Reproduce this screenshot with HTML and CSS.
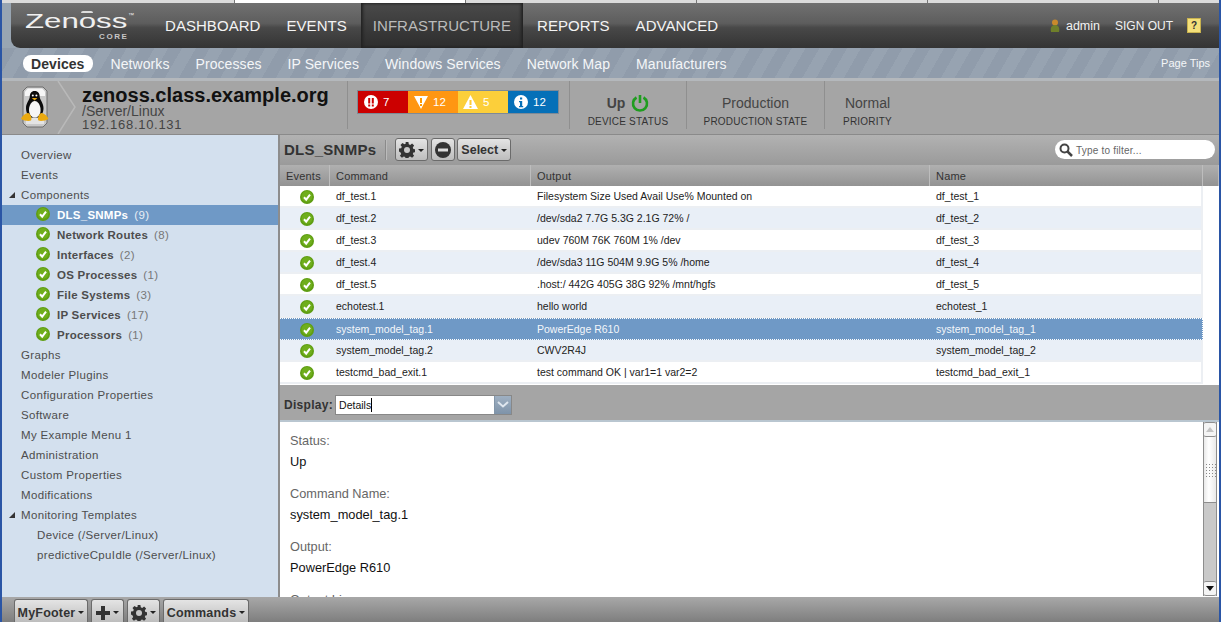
FILE: index.html
```html
<!DOCTYPE html>
<html lang="en">
<head>
<meta charset="utf-8">
<title>Zenoss Core</title>
<link rel="stylesheet" href="styles.css">
</head>
<body>
<svg class="defs" width="0" height="0" aria-hidden="true">
  <defs>
    <symbol id="ok" viewBox="0 0 14 14">
      <circle cx="7" cy="7" r="7" fill="#5f9e12"/>
      <circle cx="7" cy="6.400" r="5.400" fill="#6fae1c"/>
      <path d="M4 7.200 6.200 9.600 10 4.600" fill="none" stroke="#fff" stroke-width="2"/>
    </symbol>
    <symbol id="gear" viewBox="0 0 16 16">
      <path fill="#333" d="M6.600 0h2.800l.4 2.300 1.400.6 1.900-1.300 2 2-1.300 1.900.6 1.400 2.300.4v2.800l-2.300.4-.6 1.400 1.300 1.900-2 2-1.900-1.300-1.400.6-.4 2.300H6.600l-.4-2.300-1.400-.6-1.900 1.300-2-2 1.300-1.900-.6-1.400L-.1 9.400V6.600l2.300-.4.6-1.400L1.500 2.900l2-2 1.900 1.300 1.400-.6z"/>
      <circle cx="8" cy="8" r="3" fill="#c8c8c8"/>
    </symbol>
  </defs>
</svg>
<div class="topstrip">
  <span class="tab t1"></span><span class="tab t2"></span><span class="tab t3"></span><span class="tab t4"></span><span class="tab t5"></span><span class="tab t6"></span>
</div>
<header class="mainnav">
  <div class="logo">
    <span class="logo-word">Zenoss</span>
    <span class="logo-arc"></span>
    <span class="logo-tm">™</span>
    <span class="logo-core">CORE</span>
  </div>
  <nav class="navitems">
    <a class="navitem">DASHBOARD</a>
    <a class="navitem">EVENTS</a>
    <a class="navitem active">INFRASTRUCTURE</a>
    <a class="navitem">REPORTS</a>
    <a class="navitem">ADVANCED</a>
  </nav>
  <div class="userbox">
    <svg class="usericon" width="10" height="14" viewBox="0 0 10 14"><circle cx="5" cy="3.500" r="3" fill="#c98a2c"/><path d="M1 13c-1-5 1-7 4-7s5 2 4 7z" fill="#6f7f2a"/></svg>
    <span class="username">admin</span>
    <span class="signout">SIGN OUT</span>
    <span class="help">?</span>
  </div>
</header>
<div class="subnav">
  <a class="subitem selected">Devices</a>
  <a class="subitem">Networks</a>
  <a class="subitem">Processes</a>
  <a class="subitem">IP Services</a>
  <a class="subitem">Windows Services</a>
  <a class="subitem">Network Map</a>
  <a class="subitem">Manufacturers</a>
  <a class="pagetips">Page Tips</a>
</div>
<section class="devhead">
  <div class="devicon">
    <svg width="30" height="44" viewBox="0 0 30 44">
      <path d="M7 1h16l4 4v32l-4 4H7l-4-4V5z" fill="#c9c9c9" stroke="#6d6d6d"/>
      <path d="M8 2.500h14l3 3V10H5V5.500z" fill="#f6f6f6"/>
      <path d="M6 32h18v6H6z" fill="#e4e4e4"/>
      <path d="M14.500 5c-3.200 0-4.700 2.600-4.700 5.600 0 3.400-3.800 6.400-3.800 11.400 0 4.400 2 8 4.500 9.500h8.500c2.500-1.500 4.500-5.100 4.500-9.500 0-5-3.800-8-3.800-11.400 0-3-1.500-5.600-5-5.600z" fill="#0c0c0c"/>
      <path d="M14.800 15c-3.300 0-5.800 4.400-5.800 9 0 4.400 2.400 7.600 5.800 7.600s5.800-3.200 5.800-7.600c0-4.600-2.500-9-5.800-9z" fill="#f6f6f6"/>
      <circle cx="12.800" cy="9.400" r="1" fill="#fff"/><circle cx="16.400" cy="9.400" r="1" fill="#fff"/>
      <path d="M11.800 12h5.600l-2.800 2.500z" fill="#e8a812"/>
      <path d="M8 27c-3 .4-6.500 3.800-7 6 2.500 1.600 7.500 2.600 10 1.600 1.400-2.200-.6-7.200-3-7.600zM21.500 27c3 .4 6.500 3.800 7 6-2.500 1.600-7.500 2.600-10 1.600-1.400-2.200.6-7.200 3-7.600z" fill="#eaa90f"/>
    </svg>
  </div>
  <svg class="chevron" width="20" height="53" viewBox="0 0 20 53"><path d="M1 0 18 26 1 53" fill="none" stroke="#b9b9b9" stroke-width="1.500"/></svg>
  <div class="devtitle">
    <div class="devname">zenoss.class.example.org</div>
    <div class="devpath">/Server/Linux</div>
    <div class="devip">192.168.10.131</div>
  </div>
  <div class="evrainbow">
    <div class="ev crit"><svg width="14" height="14" viewBox="0 0 14 14"><circle cx="7" cy="7" r="7" fill="#fff"/><path d="M4.200 3h2v5.500h-2zM7.800 3h2v5.500h-2zM4.200 9.500h2v2h-2zM7.800 9.500h2v2h-2z" fill="#c00"/></svg><span>7</span></div>
    <div class="ev err"><svg width="14" height="14" viewBox="0 0 14 14"><path d="M0 1h14L7 14z" fill="#fff"/><path d="M6 3h2v5H6zM6 9h2v2H6z" fill="#f90"/></svg><span>12</span></div>
    <div class="ev warn"><svg width="15" height="14" viewBox="0 0 15 14"><path d="M7.500 0 15 14H0z" fill="#fff"/><path d="M6.500 5h2v5h-2zM6.500 11h2v2h-2z" fill="#fc3"/></svg><span>5</span></div>
    <div class="ev info"><svg width="14" height="14" viewBox="0 0 14 14"><circle cx="7" cy="7" r="7" fill="#fff"/><path d="M6 2.500h2.200v2H6zM5 6h3.200v5h1v1.200H5V11h1V7.200H5z" fill="#0570b8"/></svg><span>12</span></div>
  </div>
  <div class="stat s-status">
    <div class="statval up">Up<svg class="power" width="18" height="18" viewBox="0 0 18 18"><path d="M5.500 3.500a7 7 0 1 0 7 0" fill="none" stroke="#1f9d1f" stroke-width="2.600"/><path d="M9 1v8" stroke="#1f9d1f" stroke-width="2.600"/></svg></div>
    <div class="statlabel">DEVICE STATUS</div>
  </div>
  <div class="stat s-prod">
    <div class="statval">Production</div>
    <div class="statlabel">PRODUCTION STATE</div>
  </div>
  <div class="stat s-prio">
    <div class="statval">Normal</div>
    <div class="statlabel">PRIORITY</div>
  </div>
</section>
<main class="workspace">
  <aside class="sidebar">
    <ul class="tree">
      <li class="node">Overview</li>
      <li class="node">Events</li>
      <li class="node"><span class="arrow"></span>Components</li>
      <li class="comp sel"><svg class="okicon"><use href="#ok"/></svg><b>DLS_SNMPs</b><span class="cnt">(9)</span></li>
      <li class="comp"><svg class="okicon"><use href="#ok"/></svg><b>Network Routes</b><span class="cnt">(8)</span></li>
      <li class="comp"><svg class="okicon"><use href="#ok"/></svg><b>Interfaces</b><span class="cnt">(2)</span></li>
      <li class="comp"><svg class="okicon"><use href="#ok"/></svg><b>OS Processes</b><span class="cnt">(1)</span></li>
      <li class="comp"><svg class="okicon"><use href="#ok"/></svg><b>File Systems</b><span class="cnt">(3)</span></li>
      <li class="comp"><svg class="okicon"><use href="#ok"/></svg><b>IP Services</b><span class="cnt">(17)</span></li>
      <li class="comp"><svg class="okicon"><use href="#ok"/></svg><b>Processors</b><span class="cnt">(1)</span></li>
      <li class="node">Graphs</li>
      <li class="node">Modeler Plugins</li>
      <li class="node">Configuration Properties</li>
      <li class="node">Software</li>
      <li class="node">My Example Menu 1</li>
      <li class="node">Administration</li>
      <li class="node">Custom Properties</li>
      <li class="node">Modifications</li>
      <li class="node"><span class="arrow"></span>Monitoring Templates</li>
      <li class="leaf">Device (/Server/Linux)</li>
      <li class="leaf">predictiveCpuIdle (/Server/Linux)</li>
    </ul>
  </aside>
  <div class="content">
    <div class="toolbar">
      <span class="tbtitle">DLS_SNMPs</span>
      <span class="tbsep"></span>
      <button class="btn btn-gear"><svg width="16" height="16"><use href="#gear"/></svg><i class="caret"></i></button>
      <button class="btn btn-minus"><svg width="16" height="16" viewBox="0 0 16 16"><circle cx="8" cy="8" r="8" fill="#333"/><rect x="3" y="6.500" width="10" height="3" fill="#ddd"/></svg></button>
      <button class="btn btn-select">Select<i class="caret"></i></button>
      <label class="filter">
        <svg width="14" height="14" viewBox="0 0 14 14"><circle cx="5.500" cy="5.500" r="4" fill="none" stroke="#444" stroke-width="2"/><path d="M8.500 8.500 13 13" stroke="#444" stroke-width="2.500"/></svg>
        <span>Type to filter...</span>
      </label>
    </div>
    <div class="grid">
      <div class="ghead">
        <div class="hc c1">Events</div><div class="hc c2">Command</div><div class="hc c3">Output</div><div class="hc c4">Name</div><div class="hc c5"></div>
      </div>
      <div class="row"><div class="c1"><svg class="okrow"><use href="#ok"/></svg></div><div class="c2">df_test.1</div><div class="c3">Filesystem Size Used Avail Use% Mounted on</div><div class="c4">df_test_1</div></div>
      <div class="row alt"><div class="c1"><svg class="okrow"><use href="#ok"/></svg></div><div class="c2">df_test.2</div><div class="c3">/dev/sda2 7.7G 5.3G 2.1G 72% /</div><div class="c4">df_test_2</div></div>
      <div class="row"><div class="c1"><svg class="okrow"><use href="#ok"/></svg></div><div class="c2">df_test.3</div><div class="c3">udev 760M 76K 760M 1% /dev</div><div class="c4">df_test_3</div></div>
      <div class="row alt"><div class="c1"><svg class="okrow"><use href="#ok"/></svg></div><div class="c2">df_test.4</div><div class="c3">/dev/sda3 11G 504M 9.9G 5% /home</div><div class="c4">df_test_4</div></div>
      <div class="row"><div class="c1"><svg class="okrow"><use href="#ok"/></svg></div><div class="c2">df_test.5</div><div class="c3">.host:/ 442G 405G 38G 92% /mnt/hgfs</div><div class="c4">df_test_5</div></div>
      <div class="row alt"><div class="c1"><svg class="okrow"><use href="#ok"/></svg></div><div class="c2">echotest.1</div><div class="c3">hello world</div><div class="c4">echotest_1</div></div>
      <div class="row chosen"><div class="c1"><svg class="okrow"><use href="#ok"/></svg></div><div class="c2">system_model_tag.1</div><div class="c3">PowerEdge R610</div><div class="c4">system_model_tag_1</div></div>
      <div class="row alt"><div class="c1"><svg class="okrow"><use href="#ok"/></svg></div><div class="c2">system_model_tag.2</div><div class="c3">CWV2R4J</div><div class="c4">system_model_tag_2</div></div>
      <div class="row"><div class="c1"><svg class="okrow"><use href="#ok"/></svg></div><div class="c2">testcmd_bad_exit.1</div><div class="c3">test command OK | var1=1 var2=2</div><div class="c4">testcmd_bad_exit_1</div></div>
    </div>
    <div class="displaybar">
      <span class="displaylabel">Display:</span>
      <div class="combo">
        <span class="comboval">Details<i class="cursor"></i></span>
        <span class="combobtn"><svg width="12" height="7" viewBox="0 0 12 7"><path d="M1 1 6 5.500 11 1" fill="none" stroke="#dfe6ee" stroke-width="2"/></svg></span>
      </div>
    </div>
    <div class="details">
      <div class="fields">
        <div class="field"><div class="flabel">Status:</div><div class="fvalue">Up</div></div>
        <div class="field"><div class="flabel">Command Name:</div><div class="fvalue">system_model_tag.1</div></div>
        <div class="field"><div class="flabel">Output:</div><div class="fvalue">PowerEdge R610</div></div>
        <div class="field"><div class="flabel">Output Lines:</div></div>
      </div>
      <div class="scrollbar">
        <div class="sb-up"><i></i></div>
        <div class="sb-thumb"><span class="grip"></span></div>
        <div class="sb-track"></div>
        <div class="sb-down"><i></i></div>
      </div>
    </div>
  </div>
</main>
<footer class="footbar">
  <button class="btn fb-my">MyFooter<i class="caret"></i></button>
  <button class="btn fb-plus"><svg width="14" height="14" viewBox="0 0 14 14"><path d="M5 0h4v5h5v4H9v5H5V9H0V5h5z" fill="#333"/></svg><i class="caret"></i></button>
  <button class="btn fb-gear"><svg width="16" height="16"><use href="#gear"/></svg><i class="caret"></i></button>
  <button class="btn fb-cmd">Commands<i class="caret"></i></button>
</footer>
</body>
</html>
```
FILE: styles.css
```css
* { box-sizing: border-box; }
html, body { margin: 0; padding: 0; height: 622px; overflow: hidden; }
body {
  width: 1221px;
  display: flex;
  flex-direction: column;
  font-family: "Liberation Sans", Arial, sans-serif;
  background: #98a5b2;
  border-left: 2px solid #2a55a5;
  border-right: 2px solid #2a55a5;
}
.defs { position: absolute; }
.topstrip { height: 3px; display: flex; background: #dcdcdc; flex: none; overflow: hidden; }
.tab { display: block; height: 3px; border-right: 1px solid #777; background: #dcdcdc; width: 231px; flex: none; }
.t1 { width: 233px; }
.t2 { background: #fff; }
.t6 { width: 60px; border-right: 0; }

.mainnav {
  flex: none; height: 45px; margin-left: 9px; display: flex; align-items: stretch;
  border-bottom-left-radius: 9px; color: #f2f2f2;
  background: linear-gradient(#717171 0%, #5d5d5d 45%, #484848 55%, #343434 100%);
}
.logo { width: 141px; flex: none; position: relative; color: #f0f0f0; }
.logo-word {
  display: block; padding: 8px 0 0 14px; font-size: 20px; line-height: 20px; width: 90px;
  transform: scaleX(1.56); transform-origin: 14px 0;
}
.logo-arc { position: absolute; left: 70px; top: 8px; width: 12px; height: 2px; border-radius: 2px 2px 0 0; background: #ddd; }
.logo-tm { position: absolute; left: 117px; top: 8px; font-size: 6px; line-height: 8px; }
.logo-core { position: absolute; left: 88px; top: 29px; font-size: 8px; line-height: 9px; font-weight: bold; letter-spacing: 1.6px; color: #c6c6c6; }
.navitems { display: flex; }
.navitem { display: block; padding: 14px 13px 0; font-size: 15px; line-height: 18px; color: #f4f4f4; letter-spacing: 0.05px; }
.navitem.active {
  color: #bbb;
  background: linear-gradient(#4a4a4a, #2d2d2d);
  box-shadow: inset 2px 0 3px #222, inset -2px 0 3px #222;
  padding: 14px 12px 0;
  margin: 0 1px;
}
.userbox { margin-left: auto; display: flex; align-items: center; padding: 0 18px 0 0; font-size: 12.500px; height: 45px; }
.usericon { margin-right: 6px; }
.username { margin-right: 15px; }
.signout { margin-right: 14px; font-size: 12px; }
.help {
  width: 14px; height: 15px; background: #f4e07a; border: 1px solid #c8b24f; color: #333;
  font-size: 10px; font-weight: bold; text-align: center; line-height: 13px;
}

.subnav {
  flex: none; height: 30px; display: flex; align-items: center; padding: 1px 0 0 21px; color: #f4f6f8; font-size: 14px;
  background: repeating-linear-gradient(120deg, #909cab 0 12px, #97a3b1 12px 24px);
}
.subitem { margin-right: 26px; letter-spacing: 0.08px; }
.subitem.selected {
  background: #fff; color: #333; font-weight: bold; border-radius: 8px; padding: 1px 8px 0; line-height: 16px; margin-right: 18px;
}
.pagetips { margin-left: auto; margin-right: 9px; font-size: 11px; margin-top: -2px; }

.devhead {
  flex: none; height: 57px; display: flex; align-items: flex-start; background: #a5a5a5;
  border-top: 3px solid #b4b8bc; border-bottom: 1px solid #8a8a8a; color: #333;
}
.devicon { width: 55px; flex: none; padding: 5px 0 0 18px; }
.devtitle { margin-left: 5px; width: 266px; flex: none; height: 48px; border-right: 1px solid #8f8f8f; }
.devname { font-size: 20px; font-weight: bold; line-height: 20px; margin-top: 4px; color: #111; }
.devpath { font-size: 14px; line-height: 13px; color: #444; }
.devip { font-size: 13px; line-height: 13px; color: #444; letter-spacing: 0.7px; }
.evrainbow {
  display: flex; margin: 9px 0 0 9px; width: 202px; height: 24px; border: 1px solid #7e8a96; flex: none; color: #fff; font-size: 11.500px;
}
.ev { width: 50px; display: flex; align-items: center; padding-left: 6px; gap: 5px; }
.crit { background: #cc0000; }
.err { background: #ff9612; }
.warn { background: #fccf3a; padding-left: 5px; }
.info { background: #0570b8; }
.stat { text-align: center; height: 48px; border-left: 1px solid #8f8f8f; padding-top: 12px; flex: none; }
.s-status { margin-left: 10px; width: 117px; }
.s-prod { width: 138px; }
.s-prio { width: 86px; }
.statval { font-size: 14px; line-height: 20px; color: #444; display: flex; justify-content: center; align-items: center; gap: 6px; }
.statval.up { font-weight: bold; }
.statlabel { font-size: 10px; line-height: 16px; margin-top: 1px; letter-spacing: 0.2px; color: #333; }

.workspace { flex: 1; display: flex; min-height: 0; }
.sidebar { width: 278px; flex: none; background: #d3e0ee; border-right: 2px solid #8d8d8d; padding-top: 10px; overflow: hidden; }
.tree { list-style: none; margin: 0; padding: 0; font-size: 11.500px; color: #4d4d4d; letter-spacing: 0.35px; }
.tree li { height: 20px; line-height: 20px; display: flex; align-items: center; position: relative; white-space: nowrap; }
.node { padding-left: 19px; }
.arrow {
  position: absolute; left: 7px; top: 7px; width: 0; height: 0;
  border-left: 6px solid transparent; border-bottom: 6px solid #333;
}
.comp { padding-left: 34px; }
.comp b { margin-left: 7px; font-size: 11.500px; letter-spacing: 0.25px; }
.cnt { color: #777; margin-left: 6px; }
.okicon { width: 14px; height: 14px; margin-top: -3px; flex: none; }
.comp.sel { background: #6f99c6; color: #fff; }
.comp.sel .cnt { color: #e8eef5; }
.leaf { padding-left: 35px; }

.content { flex: 1; min-width: 0; display: flex; flex-direction: column; background: #a5a5a5; }
.toolbar {
  height: 30px; flex: none; display: flex; align-items: center; padding: 0 0 1px 4px;
  background: linear-gradient(#b2b2b2, #9a9a9a);
}
.tbtitle { font-size: 15px; font-weight: bold; color: #333; letter-spacing: 0.25px; }
.tbsep { width: 1px; height: 20px; background: #8a8a8a; margin: 0 9px; box-shadow: 1px 0 0 #bbb; }
.btn {
  font-family: inherit; font-size: 12.500px; font-weight: bold; color: #333; height: 23px; padding: 1px 3px 0;
  border: 1px solid #6b6b6b; border-radius: 3px; background: linear-gradient(#e4e4e4, #bdbdbd);
  display: inline-flex; align-items: center; justify-content: center; gap: 3px; margin: 0;
}
.caret { display: inline-block; width: 0; height: 0; border: 3px solid transparent; border-top: 3px solid #222; border-bottom: 0; }
.btn-gear { width: 33px; }
.btn-minus { width: 24px; margin-left: 3px; }
.btn-select { width: 54px; margin-left: 2px; }
.filter {
  margin-left: auto; margin-right: 4px; width: 160px; height: 19px; background: #fff; border-radius: 10px; display: flex; align-items: center; gap: 3px;
  padding: 0 0 0 4px; font-size: 10px; color: #666; letter-spacing: 0.2px;
}
.filter span { padding-top: 2px; }
.grid { flex: none; height: 220px; background: #fff; font-size: 10.500px; color: #222; }
.ghead { height: 21px; display: flex; background: linear-gradient(#b0b0b0, #939393); color: #333; font-size: 11px; letter-spacing: 0.2px; }
.hc { line-height: 22px; border-right: 1px solid #bdbdbd; }
.c1 { width: 50px; flex: none; }
.c2 { width: 201px; flex: none; padding-left: 6px; }
.c3 { width: 399px; flex: none; padding-left: 6px; }
.c4 { width: 273px; flex: none; padding-left: 6px; }
.c5 { flex: 1; }
.hc.c1 { padding-left: 6px; }
.row { display: flex; height: 22px; width: 923px; align-items: center; border-bottom: 2px solid #eceff3; border-right: 2px solid #eceff3; }
.row.alt { background: #e9eff7; }
.row.chosen { background: #6f99c6; color: #f4f7fa; border: 1px dotted #fff; border-left: 0; }
.row .c1 { display: flex; justify-content: center; padding-left: 4px; }
.okrow { width: 14px; height: 14px; margin-top: 2px; }
.displaybar { height: 37px; flex: none; display: flex; align-items: center; padding: 4px 0 0 4px; border-bottom: 2px solid #b9c6d0; background: #a5a5a5; }
.displaylabel { font-size: 12px; font-weight: bold; color: #333; letter-spacing: 0.3px; }
.combo { margin-left: 2px; width: 177px; height: 20px; background: #fff; border: 1px solid #888; display: flex; font-size: 10.500px; color: #111; }
.comboval { flex: 1; line-height: 18px; padding-left: 3px; display: flex; align-items: center; }
.cursor { width: 1px; height: 14px; background: #000; }
.combobtn { width: 17px; background: linear-gradient(#9fb0c2, #7e93a9); display: flex; align-items: center; justify-content: center; border-left: 1px solid #8295a8; }
.details { flex: 1; min-height: 0; background: #fff; display: flex; overflow: hidden; }
.fields { flex: 1; padding: 10px 0 0 10px; }
.field { height: 53px; }
.flabel { font-size: 12.750px; line-height: 18px; color: #666; }
.fvalue { font-size: 12.800px; line-height: 18px; margin-top: 3px; color: #111; }
.scrollbar { width: 14px; margin: 0 2px 1px 0; display: flex; flex-direction: column; background: #c9c9c9; border-left: 1px solid #8d8d8d; border-right: 1px solid #8d8d8d; }
.sb-up, .sb-down { height: 15px; flex: none; background: #f4f4f4; display: flex; align-items: center; justify-content: center; border-top: 1px solid #8d8d8d; border-bottom: 1px solid #8d8d8d; border-radius: 2px; }
.sb-up i { width: 0; height: 0; border: 4px solid transparent; border-bottom: 5px solid #c3c3c3; border-top: 0; }
.sb-down i { width: 0; height: 0; border: 4px solid transparent; border-top: 5px solid #111; border-bottom: 0; }
.sb-thumb { height: 66px; flex: none; background: linear-gradient(90deg, #e9e9e9, #fff 40%, #e9e9e9); border-bottom: 1px solid #8d8d8d; display: flex; align-items: center; justify-content: center; }
.grip { width: 11px; height: 14px; background-image: radial-gradient(#8a8a8a 0.6px, transparent 0.8px); background-size: 3px 3px; }
.sb-track { flex: 1; }

.footbar {
  flex: none; height: 25px; display: flex; align-items: flex-end; gap: 3px; padding-left: 12px;
  background: linear-gradient(#a8a8a8, #7e7e7e);
}
.footbar .btn { border-bottom: 0; border-radius: 3px 3px 0 0; padding-top: 3px; letter-spacing: 0.2px; }
.fb-my { width: 74px; }
.fb-plus { width: 33px; }
.fb-gear { width: 33px; }
.fb-cmd { width: 86px; }
```
